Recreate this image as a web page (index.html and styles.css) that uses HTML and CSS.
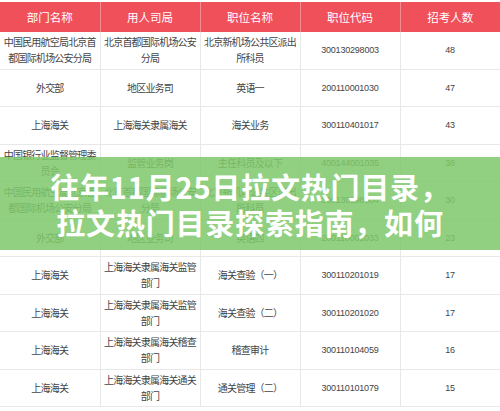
FILE: index.html
```html
<!DOCTYPE html>
<html lang="zh-CN">
<head>
<meta charset="utf-8">
<title>往年11月25日拉文热门目录</title>
<link rel="stylesheet" href="styles.css">
</head>
<body>
<div class="page">
  <table class="jobs">
    <colgroup><col><col><col><col><col></colgroup>
    <thead>
      <tr><th>部门名称</th><th>用人司局</th><th>职位名称</th><th>职位代码</th><th>招考人数</th></tr>
    </thead>
    <tbody>
      <tr><td>中国民用航空局北京首都国际机场公安分局</td><td>北京首都国际机场公安分局</td><td>北京新机场公共区派出所科员</td><td class="num">300130298003</td><td class="num">48</td></tr>
      <tr><td>外交部</td><td>地区业务司</td><td>英语一</td><td class="num">200110001030</td><td class="num">47</td></tr>
      <tr><td>上海海关</td><td>上海海关隶属海关</td><td>海关业务</td><td class="num">300110401017</td><td class="num">43</td></tr>
      <tr><td>中国银行业监督管理委员会</td><td>监管业务岗</td><td>主任科员及以下</td><td class="num">400144001035</td><td class="num">38</td></tr>
      <tr><td>中国民用航空局北京首都国际机场公安分局</td><td>北京首都国际机场公安分局</td><td>北京新机场公共区派出所科员</td><td class="num">300130298004</td><td class="num">30</td></tr>
      <tr><td>外交部</td><td>地区业务司</td><td>英语四</td><td class="num">200110001033</td><td class="num">23</td></tr>
      <tr><td>上海海关</td><td>上海海关隶属海关监管部门</td><td>海关查验（一）</td><td class="num">300110201019</td><td class="num">17</td></tr>
      <tr><td>上海海关</td><td>上海海关隶属海关监管部门</td><td>海关查验（二）</td><td class="num">300110201020</td><td class="num">17</td></tr>
      <tr><td>上海海关</td><td>上海海关隶属海关稽查部门</td><td>稽查审计</td><td class="num">300110104059</td><td class="num">16</td></tr>
      <tr><td>上海海关</td><td>上海海关隶属海关通关部门</td><td>通关管理（二）</td><td class="num">300110101079</td><td class="num">15</td></tr>
    </tbody>
  </table>
  <div class="banner">
    <h1 class="banner-title">往年11月25日拉文热门目录，<br>拉文热门目录探索指南，如何</h1>
  </div>
</div>
</body>
</html>
```

FILE: styles.css
```css
html, body {
  margin: 0;
  padding: 0;
  background: #ffffff;
}

.page {
  position: relative;
  width: 500px;
  height: 411px;
  overflow: hidden;
  padding-top: 2px;
  box-sizing: border-box;
  font-family: "Noto Sans CJK SC", "Noto Sans", sans-serif;
}

.jobs {
  width: 500px;
  border-collapse: collapse;
  table-layout: fixed;
}

.jobs col {
  width: 100px;
}

.jobs th {
  height: 30px;
  padding: 0;
  background: #f0505a;
  color: #ffffff;
  font-weight: normal;
  font-size: 11.5px;
  border-left: 1px solid #f58d92;
  text-align: center;
  vertical-align: middle;
}

.jobs th:first-child {
  border-left: none;
}

.jobs td {
  height: 36.5px;
  padding: 0 2px;
  border: 1px solid #e8e8e8;
  border-top: none;
  color: #444444;
  font-size: 10px;
  letter-spacing: -0.8px;
  line-height: 16px;
  text-align: center;
  vertical-align: middle;
}

.jobs td.num {
  font-family: "Liberation Sans", "Noto Sans", sans-serif;
  font-size: 9px;
  letter-spacing: -0.2px;
}

.jobs td:first-child {
  border-left: none;
}

.banner {
  position: absolute;
  left: 0;
  top: 157px;
  width: 500px;
  height: 93px;
  background: rgba(127, 200, 107, 0.86);
  display: flex;
  align-items: center;
  justify-content: center;
}

.banner-title {
  margin: 0;
  color: #ffffff;
  font-size: 29px;
  font-weight: bold;
  line-height: 36px;
  text-align: center;
  letter-spacing: 0.8px;
}
```
